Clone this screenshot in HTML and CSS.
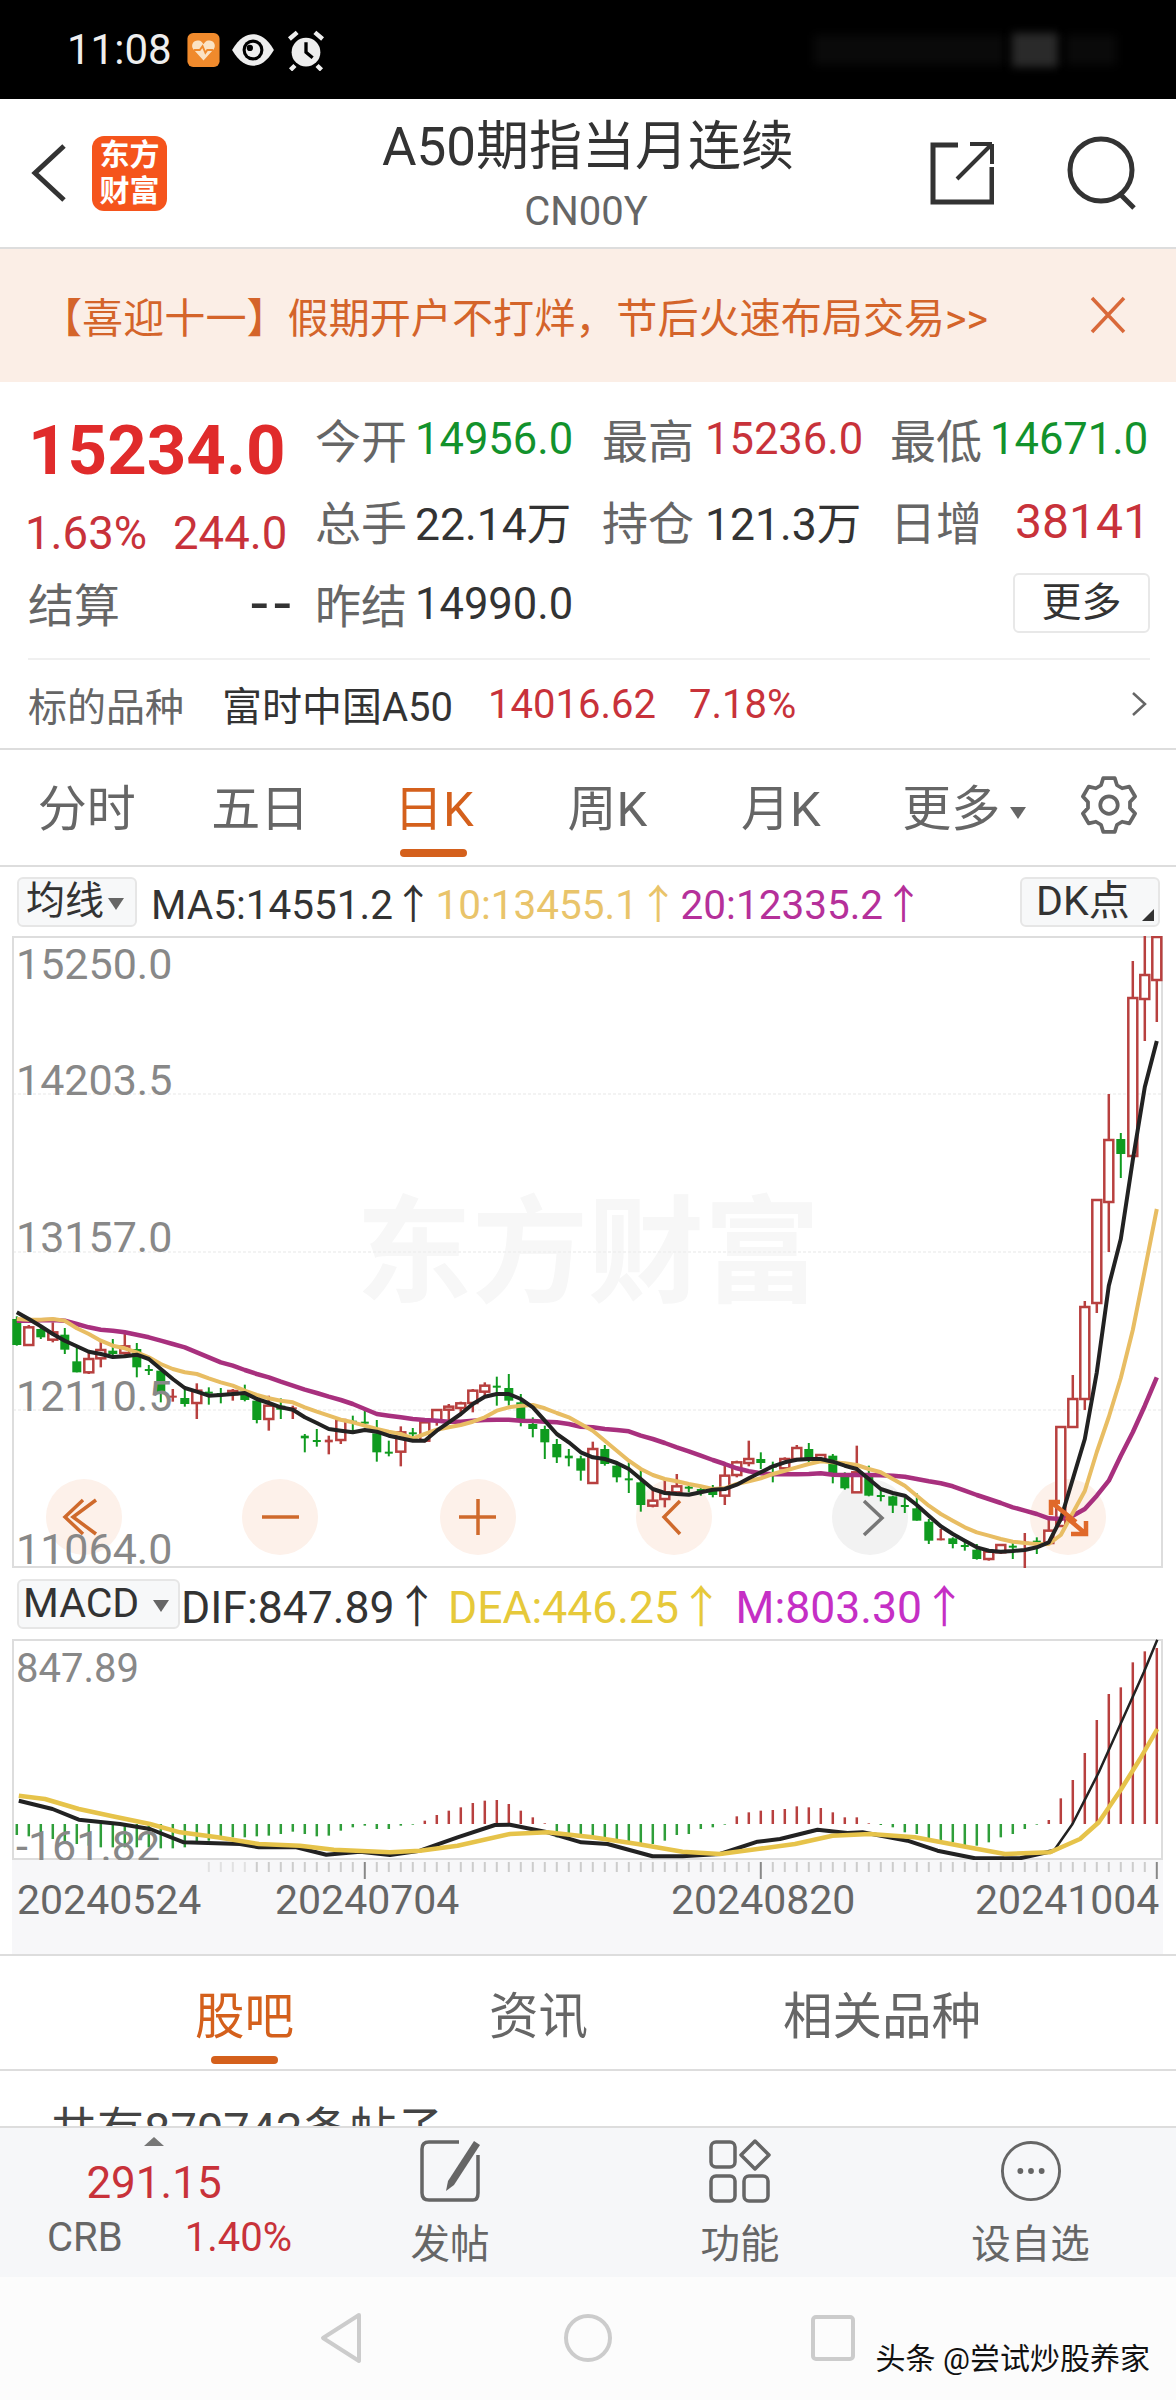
FILE: index.html
```html
<!DOCTYPE html>
<html lang="zh-CN">
<head>
  <meta charset="UTF-8">
  <meta name="viewport" content="width=device-width, initial-scale=1.0">
  <title>A50期指当月连续</title>
  <link rel="stylesheet" href="styles.css">
</head>
<body>
  <div class="page">

    <!-- Status bar -->
    <div class="status-bar">
      <span class="status-time">11:08</span>
      <svg class="status-app" viewBox="0 0 34 36">
        <rect width="34" height="36" rx="6" fill="#f08a2c"/>
        <path d="M17 29 6 17c-3-5 1-10 6-9 2 0 4 2 5 4 1-2 3-4 5-4 5-1 9 4 6 9z" fill="#fbe3c4"/>
        <path d="M7 18h6l3-4 3 7 2-3h6" fill="none" stroke="#f08a2c" stroke-width="2"/>
      </svg>
      <svg class="status-eye" viewBox="0 0 44 34">
        <path d="M2 17C9 5 16 2 22 2s13 3 20 15c-7 12-14 15-20 15S9 29 2 17z" fill="#eee"/>
        <circle cx="22" cy="17" r="10" fill="#000"/>
        <circle cx="22" cy="17" r="7" fill="#eee"/>
        <circle cx="19" cy="15" r="3" fill="#000"/>
      </svg>
      <svg class="status-alarm" viewBox="0 0 36 38">
        <circle cx="18" cy="21" r="13" fill="#eee"/>
        <path d="M18 12v9l6 5" fill="none" stroke="#000" stroke-width="3"/>
        <path d="M3 9l7-6M33 9l-7-6M8 33l-4 4M28 33l4 4" stroke="#eee" stroke-width="4"/>
      </svg>
      <div class="status-right">
        <span class="status-smudge-dim"></span>
        <span class="status-smudge"></span>
        <span class="status-smudge-end"></span>
      </div>
    </div>

    <!-- Header -->
    <div class="header">
      <div class="header-left">
        <svg class="back-icon" viewBox="0 0 38 60">
          <path d="M34 3 5 30l29 27" fill="none" stroke="#333" stroke-width="5"/>
        </svg>
        <div class="app-logo">东方<br>财富</div>
      </div>
      <div class="header-title">
        <div class="title-name">A50期指当月连续</div>
        <div class="title-code">CN00Y</div>
      </div>
      <div class="header-right">
        <svg class="share-icon" viewBox="0 0 64 64">
          <path d="M28 4H3v57h59V26" fill="none" stroke="#333" stroke-width="5"/>
          <path d="M62 3v20M62 3H40M62 3 27 38" fill="none" stroke="#333" stroke-width="4"/>
        </svg>
        <svg class="search-icon" viewBox="0 0 74 76">
          <circle cx="35" cy="35" r="31" fill="none" stroke="#333" stroke-width="5"/>
          <path d="M53 58l15 15" stroke="#333" stroke-width="5"/>
        </svg>
      </div>
    </div>

    <!-- Promo banner -->
    <div class="promo">
      <span>【喜迎十一】假期开户不打烊，节后火速布局交易&gt;&gt;</span>
      <svg class="promo-close" viewBox="0 0 36 38">
        <path d="M2 2l32 34M34 2 2 36" stroke="#d9693a" stroke-width="3.5"/>
      </svg>
    </div>

    <!-- Quote -->
    <div class="quote">
      <div class="quote-cell price">15234.0</div>
      <div class="quote-stats">
        <span class="label">今开</span><span class="value green">14956.0</span>
        <span class="label">最高</span><span class="value red">15236.0</span>
        <span class="label">最低</span><span class="value green">14671.0</span>
      </div>
      <div class="quote-cell change">
        <span>1.63%</span><span>244.0</span>
      </div>
      <div class="quote-stats">
        <span class="label">总手</span><span class="value value-wan">22.14万</span>
        <span class="label">持仓</span><span class="value value-wan">121.3万</span>
        <span class="label">日增</span><span class="value red value-right">38141</span>
      </div>
      <div class="quote-cell settle">
        <span class="label">结算</span><span class="value value-dash">--</span>
      </div>
      <div class="quote-stats">
        <span class="label">昨结</span><span class="value">14990.0</span>
        <span></span><span></span>
        <span></span><button class="more-btn">更多</button>
      </div>
    </div>

    <!-- Underlying -->
    <div class="underlying">
      <span class="underlying-label">标的品种</span>
      <span class="underlying-name">富时中国A50</span>
      <span class="underlying-num">14016.62</span>
      <span class="underlying-num">7.18%</span>
      <svg class="underlying-arrow" viewBox="0 0 16 26">
        <path d="M2 2l12 11L2 24" fill="none" stroke="#666" stroke-width="2.5"/>
      </svg>
    </div>

    <!-- Period tabs -->
    <div class="period-tabs">
      <span class="period-tab">分时</span>
      <span class="period-tab">五日</span>
      <span class="period-tab active">日K</span>
      <span class="period-tab">周K</span>
      <span class="period-tab">月K</span>
      <span class="period-tab period-more">更多<i class="caret"></i></span>
      <svg class="gear-icon" viewBox="0 0 48 48">
        <polygon points="17.6,8.2 19.4,2.5 28.6,2.5 30.4,8.2 34.5,10.6 40.3,9.3 44.9,17.2 40.8,21.6 40.8,26.4 44.9,30.8 40.3,38.7 34.5,37.4 30.4,39.8 28.6,45.5 19.4,45.5 17.6,39.8 13.5,37.4 7.7,38.7 3.1,30.8 7.2,26.4 7.2,21.6 3.1,17.2 7.7,9.3 13.5,10.6" fill="none" stroke="#666" stroke-width="3" stroke-linejoin="round"/>
        <circle cx="24" cy="24" r="7" fill="none" stroke="#666" stroke-width="3"/>
      </svg>
    </div>

    <!-- MA legend -->
    <div class="legend legend-ma">
      <button class="legend-btn ma-btn">均线<i class="caret"></i></button>
      <span class="legend-item ink ma5">MA5:14551.2↑</span>
      <span class="legend-item ma10">10:13455.1↑</span>
      <span class="legend-item ma20">20:12335.2↑</span>
      <button class="legend-btn dk-btn">DK点<i class="corner"></i></button>
    </div>

    <!-- K line chart -->
    <div class="chart chart-main">
      <div class="watermark">东方财富</div>
      <svg id="klineChart" width="1151" height="632" viewBox="12 937 1151 632"></svg>
      <span class="y-label y1">15250.0</span>
      <span class="y-label y2">14203.5</span>
      <span class="y-label y3">13157.0</span>
      <span class="y-label y4">12110.5</span>
      <span class="y-label y5">11064.0</span>
    </div>

    <!-- MACD legend -->
    <div class="legend legend-macd">
      <button class="legend-btn macd-btn">MACD<i class="caret"></i></button>
      <span class="legend-item ink">DIF:847.89↑</span>
      <span class="legend-item dea">DEA:446.25↑</span>
      <span class="legend-item macd-m">M:803.30↑</span>
    </div>

    <!-- MACD chart -->
    <div class="chart chart-macd">
      <svg id="macdChart" width="1151" height="221" viewBox="12 1640 1151 221"></svg>
      <span class="y-label m1">847.89</span>
      <span class="y-label m2">-161.82</span>
    </div>

    <!-- Date axis -->
    <div class="date-axis">
      <svg id="dateTicks" width="1151" height="24" viewBox="12 1861 1151 24"></svg>
      <span class="date d1">20240524</span>
      <span class="date d2">20240704</span>
      <span class="date d3">20240820</span>
      <span class="date d4">20241004</span>
    </div>

    <!-- Content tabs -->
    <div class="content-tabs">
      <span class="content-tab active">股吧</span>
      <span class="content-tab">资讯</span>
      <span class="content-tab">相关品种</span>
    </div>
    <div class="post-count">
      <div class="post-count-text">共有870742条帖子</div>
    </div>

    <!-- Bottom toolbar -->
    <div class="toolbar">
      <div class="crb">
        <i class="crb-arrow"></i>
        <div class="crb-value">291.15</div>
        <div class="crb-row"><span class="crb-name">CRB</span><span class="crb-pct">1.40%</span></div>
      </div>
      <div class="tool">
        <svg class="tool-icon" viewBox="0 0 62 64">
          <path d="M40 3H10Q3 3 3 10v44q0 7 7 7h44q5 0 5-7V16" fill="none" stroke="#666" stroke-width="3.5"/>
          <path d="M55 2 61 6 35 46l-8 6 2-10z" fill="#666"/>
        </svg>
        <span>发帖</span>
      </div>
      <div class="tool">
        <svg class="tool-icon" viewBox="0 0 62 64">
          <rect x="2" y="3" width="24" height="25" rx="5" fill="none" stroke="#666" stroke-width="3.5"/>
          <path d="M46 2 60 16 46 30 32 16z" fill="none" stroke="#666" stroke-width="3.5" stroke-linejoin="round"/>
          <rect x="2" y="37" width="24" height="25" rx="5" fill="none" stroke="#666" stroke-width="3.5"/>
          <rect x="35" y="37" width="24" height="25" rx="5" fill="none" stroke="#666" stroke-width="3.5"/>
        </svg>
        <span>功能</span>
      </div>
      <div class="tool">
        <svg class="tool-icon" viewBox="0 0 64 64">
          <circle cx="32" cy="32" r="29.5" fill="none" stroke="#666" stroke-width="3"/>
          <circle cx="21" cy="32" r="3" fill="#666"/>
          <circle cx="32" cy="32" r="3" fill="#666"/>
          <circle cx="43" cy="32" r="3" fill="#666"/>
        </svg>
        <span>设自选</span>
      </div>
    </div>

    <!-- Android nav bar -->
    <div class="nav-bar">
      <svg class="nav-icon nav-back" width="44" height="52" viewBox="0 0 44 52">
        <path d="M40 3 4 26l36 23z" fill="none" stroke="#ccc" stroke-width="4" stroke-linejoin="round"/>
      </svg>
      <svg class="nav-icon nav-home" width="52" height="52" viewBox="0 0 52 52">
        <circle cx="26" cy="26" r="22" fill="none" stroke="#ccc" stroke-width="4"/>
      </svg>
      <svg class="nav-icon" width="46" height="48" viewBox="0 0 46 48">
        <rect x="2" y="3" width="40" height="42" rx="3" fill="none" stroke="#ccc" stroke-width="4"/>
      </svg>
      <span class="source-mark">头条 @尝试炒股养家</span>
    </div>
  </div>

  <script src="chart.js"></script>
</body>
</html>
```

FILE: styles.css
```css
body {
  margin: 0;
  font-family: Roboto, "Noto Sans CJK SC", sans-serif;
  color: #333;
  background: #fff;
}

.page {
  width: 1176px;
  height: 2400px;
  display: flex;
  flex-direction: column;
  overflow: hidden;
}

button {
  font-family: inherit;
  color: #333;
}

/* Status bar */
.status-bar {
  height: 99px;
  background: #000;
  display: flex;
  align-items: center;
  padding-left: 67px;
}

.status-time {
  color: #eee;
  font-size: 42px;
  width: 120px;
}

.status-app {
  width: 33px;
  height: 34px;
}

.status-eye {
  width: 46px;
  height: 36px;
  margin-left: 10px;
}

.status-alarm {
  width: 40px;
  height: 42px;
  margin-left: 10px;
}

.status-right {
  margin-left: auto;
  display: flex;
  align-items: center;
  gap: 8px;
  margin-right: 60px;
}

.status-smudge-dim {
  width: 190px;
  height: 30px;
  background: #0a0a0a;
  filter: blur(5px);
}

.status-smudge {
  width: 46px;
  height: 34px;
  background: #2a2a2a;
  filter: blur(4px);
}

.status-smudge-end {
  width: 50px;
  height: 30px;
  background: #0a0a0a;
  filter: blur(5px);
}

/* Header */
.header {
  height: 148px;
  display: grid;
  grid-template-columns: 1fr auto 1fr;
  align-items: center;
  border-bottom: 2px solid #ddd;
}

.header-left {
  display: flex;
  align-items: center;
  padding-left: 30px;
}

.back-icon {
  width: 38px;
  height: 60px;
}

.app-logo {
  width: 75px;
  height: 75px;
  margin-left: 24px;
  background: #f5541c;
  border-radius: 12px;
  color: #fff;
  font-size: 30px;
  font-weight: 700;
  line-height: 36px;
  text-align: center;
  display: flex;
  align-items: center;
  justify-content: center;
}

.header-title {
  text-align: center;
}

.title-name {
  font-size: 53px;
  line-height: 64px;
  color: #333;
  margin-top: 5px;
}

.title-code {
  font-size: 40px;
  line-height: 50px;
  color: #666;
  margin-top: 8px;
  padding-right: 4px;
}

.header-right {
  display: flex;
  align-items: center;
  justify-content: flex-end;
  padding-right: 36px;
}

.share-icon {
  width: 64px;
  height: 64px;
  margin-right: 72px;
}

.search-icon {
  width: 74px;
  height: 76px;
}

/* Promo banner */
.promo {
  height: 133px;
  flex: none;
  box-sizing: border-box;
  padding: 0 0 2px 41px;
  background: #fbeee6;
  color: #d4642a;
  font-size: 41.1px;
  display: flex;
  align-items: center;
}

.promo-close {
  width: 36px;
  height: 38px;
  margin-left: auto;
  margin-right: 50px;
}

/* Quote */
.quote {
  height: 278px;
  flex: none;
  box-sizing: border-box;
  padding-top: 14px;
  margin: 0 26px 0 28px;
  display: grid;
  grid-template-columns: 287px 1fr;
  grid-auto-rows: 82.5px;
  border-bottom: 2px solid #f0f0f0;
}

.quote-cell {
  display: flex;
  align-items: center;
}

.quote-stats {
  display: grid;
  grid-template-columns: 100px 187px 103px 185px 100px 1fr;
  align-items: center;
  padding-top: 1px;
}

.label {
  font-size: 46px;
  color: #666;
}

.value {
  font-size: 43.5px;
  color: #333;
  padding-top: 3px;
}

.value-wan {
  font-size: 44.5px;
  padding-top: 0;
}

.value-dash {
  font-size: 62px;
  letter-spacing: 6px;
  padding-top: 0;
}

.red {
  color: #c8323a;
}

.green {
  color: #12922c;
}

.value-right {
  text-align: right;
  font-size: 48px;
}

.price {
  font-size: 69px;
  font-weight: 700;
  color: #e02b2b;
  padding-top: 26px;
}

.change {
  font-size: 45.5px;
  color: #c8323a;
  gap: 26px;
  margin-left: -3px;
  padding-top: 27px;
}

.settle {
  justify-content: space-between;
  padding-right: 18px;
}

.more-btn {
  width: 137px;
  height: 60px;
  padding: 0;
  justify-self: end;
  font-size: 40px;
  line-height: 1;
  background: #fff;
  border: 2px solid #e8e8e8;
  border-radius: 6px;
  margin-left: -40px;
}

/* Underlying row */
.underlying {
  height: 88px;
  flex: none;
  display: flex;
  align-items: center;
  padding-left: 28px;
  font-size: 39px;
  border-bottom: 2px solid #ddd;
}

.underlying-label {
  color: #666;
  width: 194px;
}

.underlying-name {
  color: #333;
  width: 266px;
  font-size: 40px;
}

.underlying-num {
  color: #c8323a;
  margin-right: 33px;
  font-size: 40px;
}

.underlying-arrow {
  width: 16px;
  height: 26px;
  margin-left: auto;
  margin-right: 29px;
}

/* Period tabs */
.period-tabs {
  flex: none;
  box-sizing: border-box;
  height: 117px;
  padding-bottom: 6px;
  display: grid;
  grid-template-columns: repeat(6, 173.5px) 1fr;
  align-items: center;
  border-bottom: 2px solid #ddd;
}

.period-tab {
  text-align: center;
  font-size: 49px;
  color: #666;
  position: relative;
}

.period-more {
  padding-left: 20px;
  white-space: nowrap;
}

.period-tab.active {
  color: #d4601c;
}

.period-tab.active::after {
  content: "";
  position: absolute;
  left: 53px;
  right: 54px;
  top: 80px;
  height: 8px;
  border-radius: 4px;
  background: #d4601c;
}

.caret {
  display: inline-block;
  width: 0;
  height: 0;
  margin-left: 10px;
  vertical-align: middle;
  border-left: 8px solid transparent;
  border-right: 8px solid transparent;
  border-top: 12px solid #666;
}

.gear-icon {
  width: 60px;
  height: 60px;
  justify-self: center;
}

/* Legends above the charts */
.legend {
  flex: none;
  display: flex;
  align-items: center;
  white-space: nowrap;
}

.legend-ma {
  height: 69px;
  font-size: 40.5px;
  padding-left: 17px;
}

.legend-macd {
  height: 71px;
  font-size: 44.5px;
  padding-left: 17px;
}

.legend-btn {
  height: 50px;
  padding: 0 0 0 7px;
  font-size: 39px;
  line-height: 1;
  text-align: left;
  background: #f7f8f9;
  border: 2px solid #e6e6e6;
  border-radius: 6px;
}

.ma-btn {
  width: 120px;
  margin-right: 14px;
}

.ma-btn .caret,
.macd-btn .caret {
  margin-left: 4px;
}

.macd-btn {
  width: 163px;
  margin-right: 1px;
  padding-left: 4px;
  font-size: 41px;
}

.macd-btn .caret {
  margin-left: 14px;
}

.dk-btn {
  width: 140px;
  margin-left: auto;
  margin-right: 16px;
  padding-left: 14px;
  font-size: 41px;
  position: relative;
}

.corner {
  position: absolute;
  right: 4px;
  bottom: 4px;
  width: 0;
  height: 0;
  border-left: 12px solid transparent;
  border-bottom: 12px solid #333;
}

.legend-item {
  margin-right: 11px;
}

.ink {
  color: #333;
}

.ma5 {
  margin-right: 2px;
}

.ma10 {
  color: #e9c46a;
  margin-right: 2px;
}

.ma20 {
  color: #b5309a;
}

.dea {
  color: #e6c93a;
  margin-left: -2px;
  margin-right: 12px;
}

.macd-m {
  color: #c52fc5;
}

/* Charts */
.chart {
  position: relative;
  flex: none;
  margin-left: 12px;
  width: 1151px;
}

.chart svg {
  position: absolute;
  left: 0;
  top: 0;
}

.chart-main {
  height: 632px;
}

.chart-macd {
  height: 221px;
}

.watermark {
  position: absolute;
  left: 344px;
  top: 259px;
  font-size: 116px;
  font-weight: 700;
  line-height: 1;
  color: #f7f7f7;
}

.y-label {
  position: absolute;
  left: 4px;
  font-size: 43px;
  line-height: 1;
  color: #888;
}

.y1 { top: 7px; }
.y2 { top: 123px; }
.y3 { top: 280px; }
.y4 { top: 439px; }
.y5 { top: 592px; }

.m1 {
  top: 10px;
  font-size: 40px;
}

.m2 {
  top: 186px;
  font-size: 43px;
}

/* Date axis */
.date-axis {
  position: relative;
  flex: none;
  height: 94px;
  margin: 0 13px 0 12px;
  background: #f7f7f9;
}

.date-axis svg {
  position: absolute;
  left: 0;
  top: 0;
}

.date {
  position: absolute;
  top: 20px;
  font-size: 41px;
  line-height: 1;
  color: #666;
}

.d1 { left: 5px; }
.d2 { left: 263px; }
.d3 { left: 659px; }
.d4 { left: 963px; }

/* Content tabs */
.content-tabs {
  height: 117px;
  flex: none;
  box-sizing: border-box;
  display: flex;
  align-items: center;
  gap: 195px;
  padding-left: 195px;
  border-top: 2px solid #ddd;
  border-bottom: 2px solid #ddd;
}

.content-tab {
  font-size: 49.5px;
  color: #666;
  position: relative;
}

.content-tab.active {
  color: #d4601c;
}

.content-tab.active::after {
  content: "";
  position: absolute;
  left: 16px;
  right: 16px;
  bottom: -16px;
  height: 8px;
  border-radius: 4px;
  background: #d4601c;
}

.post-count {
  height: 55px;
  flex: none;
  overflow: hidden;
  padding-left: 50px;
}

.post-count-text {
  font-size: 47px;
  line-height: 60px;
  margin-top: 29px;
  color: #444;
}

/* Bottom toolbar */
.toolbar {
  height: 151px;
  flex: none;
  box-sizing: border-box;
  display: grid;
  grid-template-columns: 305px 290px 290px 1fr;
  background: #f6f7f9;
  border-top: 2px solid #ddd;
}

.crb {
  position: relative;
  padding: 0 13px 0 47px;
}

.crb-arrow {
  position: absolute;
  left: 144px;
  top: 9px;
  border-left: 10px solid transparent;
  border-right: 10px solid transparent;
  border-bottom: 9px solid #777;
}

.crb-value {
  margin-top: 30px;
  font-size: 44px;
  line-height: 50px;
  text-align: center;
  padding-right: 31px;
  color: #c8323a;
}

.crb-row {
  display: flex;
  justify-content: space-between;
  margin-top: 5px;
  font-size: 40px;
  line-height: 50px;
}

.crb-name {
  color: #666;
}

.crb-pct {
  color: #c8323a;
}

.tool {
  display: flex;
  flex-direction: column;
  align-items: center;
  padding-top: 11px;
  font-size: 39.5px;
  line-height: 50px;
  color: #666;
}

.tool-icon {
  width: 62px;
  height: 64px;
  margin-bottom: 17px;
}

/* Nav bar */
.nav-bar {
  flex: 1;
  position: relative;
  background: #fcfcfc;
  display: flex;
  align-items: center;
  gap: 197px;
  padding-left: 318px;
  padding-bottom: 2px;
}

.nav-icon {
  flex: none;
}

.nav-back {
  width: 46px;
}

.nav-home {
  margin-left: 1px;
}

.source-mark {
  position: absolute;
  right: 26px;
  top: 62px;
  font-size: 30px;
  line-height: 40px;
  color: #111;
  text-shadow: 0 0 2px #fff, 1px 1px 0 #fff;
}
```

FILE: chart.js
```js
// Candles traced off the app. y values are in 1/3 px from y=1240, so a value of
// 0 is page y 1240. Each row: [colour, high, bodyTop, bodyBottom, low]
const candles = [
  ['g',232,240,318,320],['r',258,265,318,320],['g',258,270,295,300],['r',250,280,302,310],
  ['g',267,287,332,345],['g',325,367,400,400],['r',340,360,400,405],['r',307,333,358,385],
  ['g',300,335,345,350],['r',280,322,342,350],['g',312,330,385,415],['g',378,390,394,408],
  ['g',390,395,460,490],['R',450,470,474,488],['g',445,477,495,503],['r',433,455,492,540],
  ['g',445,458,462,497],['g',447,462,466,493],['r',450,456,466,485],['g',437,465,483,487],
  ['g',478,485,543,553],['r',470,500,540,575],['g',478,500,512,540],['R',500,505,510,540],
  ['g',585,590,598,640],['g',570,603,608,623],['R',590,602,610,646],['r',540,543,603,615],
  ['g',530,545,549,578],['g',507,548,552,565],['g',543,583,640,668],['g',605,638,642,652],
  ['r',562,580,638,682],['g',567,580,586,605],['r',540,550,605,610],['r',510,513,545,560],
  ['r',495,503,512,550],['r',488,493,507,530],['r',450,455,492,520],['r',430,440,458,470],
  ['g',413,440,446,500],['g',405,447,485,500],['g',465,490,548,562],['g',535,555,570,595],
  ['g',560,570,610,660],['g',600,615,655,672],['g',630,650,658,682],['g',650,658,695,725],
  ['r',608,630,732,735],['g',618,630,675,680],['g',668,680,715,730],['g',670,718,724,762],
  ['g',690,730,798,818],['r',745,785,800,805],['r',723,760,780,805],['r',705,742,760,770],
  ['g',733,743,747,760],['g',740,750,754,770],['g',738,755,768,775],['r',680,710,770,798],
  ['r',665,670,708,715],['r',605,660,672,682],['g',640,660,672,690],['g',668,680,684,730],
  ['r',655,660,688,692],['r',618,627,660,665],['g',612,630,660,678],['r',645,648,662,668],
  ['g',645,650,705,733],['g',700,710,748,752],['r',620,700,760,762],['g',680,705,770,772],
  ['g',745,768,772,787],['g',770,772,800,822],['g',775,798,802,822],['g',763,808,845,845],
  ['g',840,848,905,915],['R',870,898,904,904],['g',895,898,915,928],['g',908,918,924,935],
  ['g',915,932,960,962],['r',935,938,960,965],['r',915,918,940,945],['g',910,920,926,960],
  ['R',882,908,914,988],['g',895,905,911,945],['r',840,875,912,915],['r',564,564,861,861],
  ['r',408,480,564,564],['r',186,204,480,513],['r',-117,-117,192,222],['r',-435,-297,-111,39],
  ['g',-318,-300,-255,-183],['r',-834,-723,-249,-249],['r',-909,-792,-720,-594],['r',-909,-906,-777,-651]
];

const ma5 = [220,240,262,285,305,322,338,345,354,352,347,360,390,420,447,458,470,468,465,462,
  480,492,505,512,535,552,570,575,580,573,578,590,598,605,605,575,550,525,495,473,
  465,465,480,505,545,585,610,640,655,660,672,690,720,750,762,765,767,760,752,750,
  737,718,700,682,670,662,660,660,668,680,690,720,750,762,770,798,830,862,885,905,
  925,935,938,936,933,925,910,840,720,600,400,140,0,-237,-456,-594];

const ma10 = [240,242,242,240,245,268,285,305,320,328,340,355,375,390,400,405,418,430,440,455,
  468,478,485,490,505,518,530,542,550,560,570,578,585,598,585,572,565,558,548,535,
  515,505,500,498,508,522,535,555,575,605,635,665,690,708,720,727,735,742,750,748,
  735,727,718,705,695,685,675,667,670,673,678,690,700,720,740,770,800,825,845,865,
  880,890,900,908,912,915,915,888,822,756,639,534,417,273,93,-90];

const ma20 = [245,245,244,243,245,255,265,272,275,280,287,295,305,315,325,340,355,370,380,393,
  405,415,428,440,452,462,473,483,495,510,525,530,535,540,543,545,548,548,545,543,
  542,542,545,546,548,550,555,563,565,570,573,577,590,600,612,625,637,650,663,675,
  688,697,703,706,706,706,705,703,707,708,708,708,709,710,713,720,727,733,742,755,
  768,780,792,805,815,825,838,840,830,810,770,725,650,580,500,415];

// MACD bar ends, y in 1/3 px from y=1580. The zero line is at 735.
const macdBars = [768,772,775,780,790,795,800,805,805,805,805,805,808,808,805,795,785,778,775,775,
  772,770,765,758,765,772,770,755,745,740,750,750,740,737,725,708,695,685,672,665,
  663,675,695,715,733,775,775,775,778,785,790,795,798,795,785,768,765,750,745,737,
  712,700,695,693,690,682,685,687,700,715,715,733,738,745,760,765,778,790,790,800,
  800,790,775,765,750,737,723,658,603,522,423,345,325,250,217,207];

// DIF and DEA as [x, y], x in 3/4 px and y in 1/3 px from y=1580
const dif = [[25,665],[70,690],[105,722],[160,735],[200,750],[245,790],[320,795],[345,805],[395,805],[435,827],
  [480,818],[520,828],[560,815],[610,775],[660,738],[680,737],[730,760],[775,790],[810,795],[870,832],
  [910,832],[960,825],[1010,788],[1040,780],[1090,752],[1130,762],[1150,760],[1210,785],[1250,815],[1300,838],
  [1360,838],[1405,815]];
const difRise = [[1405,815],[1430,735],[1465,580],[1495,430],[1525,280],[1543,182]];

const dea = [[25,650],[60,660],[105,690],[150,712],[200,735],[240,760],[290,775],[345,795],[400,800],[445,812],
  [520,820],[560,815],[610,800],[680,765],[730,760],[790,775],[850,795],[910,818],[960,825],[1010,810],
  [1060,795],[1110,770],[1160,765],[1220,775],[1280,800],[1340,825],[1400,820],[1440,780],[1465,730],[1495,630],
  [1520,540],[1543,450]];

const RED = '#b8403f';
const GREEN = '#0f9b1f';
const ORANGE = '#cf6a2c';

const candleX = i => 16.8 + 12 * i;
const klineY = v => 1240 + v / 3;
const macdY = v => 1580 + v / 3;

function seriesLine(values, color, width) {
  const points = values.map((v, i) => candleX(i).toFixed(1) + ',' + klineY(v).toFixed(1)).join(' ');
  return `<polyline points="${points}" fill="none" stroke="${color}" stroke-width="${width}" stroke-linejoin="round"/>`;
}

function tracedLine(points, color, width) {
  const str = points.map(p => (p[0] * 0.75).toFixed(1) + ',' + macdY(p[1]).toFixed(1)).join(' ');
  return `<polyline points="${str}" fill="none" stroke="${color}" stroke-width="${width}" stroke-linejoin="round"/>`;
}

function drawCandle(c, i) {
  const [kind, high, top, bottom, low] = c;
  const x = candleX(i);
  const color = kind === 'g' ? GREEN : RED;
  const y0 = klineY(top);
  const h = Math.max(klineY(bottom) - y0, 2);
  let out = `<line x1="${x}" x2="${x}" y1="${klineY(high)}" y2="${klineY(low)}" stroke="${color}" stroke-width="${kind === 'g' ? 2 : 2.5}"/>`;
  if (kind === 'r') {
    out += `<rect x="${x - 4.5}" y="${y0}" width="9" height="${h}" fill="#fff" stroke="${color}" stroke-width="2.5"/>`;
  } else {
    const w = bottom - top < 10 ? 8 : 9;
    out += `<rect x="${x - w / 2}" y="${y0}" width="${w}" height="${h}" fill="${color}"/>`;
  }
  return out;
}

function drawKline() {
  let svg = '';
  // grid
  [1095, 1253, 1411].forEach(y => {
    svg += `<line x1="13" x2="1162" y1="${y}" y2="${y}" stroke="#f0f0f0" stroke-width="1.5" stroke-dasharray="3 2"/>`;
  });
  svg += '<rect x="13" y="938" width="1149" height="630" fill="none" stroke="#ddd" stroke-width="2"/>';

  // round buttons sit behind the candles
  [84, 280, 478, 674].forEach(x => {
    svg += `<circle cx="${x}" cy="1518" r="38" fill="#fdf1ea"/>`;
  });
  svg += '<circle cx="870" cy="1518" r="38" fill="#f2f2f2"/>';
  svg += '<circle cx="1068" cy="1518" r="38" fill="#fdf1ea"/>';

  candles.forEach((c, i) => { svg += drawCandle(c, i); });
  svg += seriesLine(ma20, '#a8307e', 4.5);
  svg += seriesLine(ma10, '#e8bd63', 4);
  svg += seriesLine(ma5, '#222', 4);

  // button glyphs
  const glyph = `fill="none" stroke="${ORANGE}" stroke-width="3.5"`;
  svg += `<path d="M83 1501 65 1518l18 17M96 1501 73 1518l23 17" ${glyph}/>`;
  svg += `<path d="M262 1518h37" ${glyph}/>`;
  svg += `<path d="M459 1518h37M478 1500v36" ${glyph}/>`;
  svg += `<path d="M680 1502 664 1518l16 17" ${glyph}/>`;
  svg += '<path d="M864 1502l18 17-18 17" fill="none" stroke="#777" stroke-width="3.5"/>';
  const arrow = 'fill="none" stroke="#e0692a" stroke-width="4.5"';
  svg += `<path d="M1060 1503h-9v13M1051 1503l25 20" ${arrow}/>`;
  svg += `<path d="M1071 1535h15v-13M1086 1535l-20-17" ${arrow}/>`;
  document.getElementById('klineChart').innerHTML = svg;
}

function drawMacd() {
  let svg = '<rect x="13" y="1641" width="1149" height="219" fill="none" stroke="#ddd" stroke-width="2"/>';
  macdBars.forEach((v, i) => {
    const x = candleX(i);
    const color = v > 735 ? '#2f9e3a' : '#b8403f';
    svg += `<line x1="${x}" x2="${x}" y1="${macdY(735)}" y2="${macdY(v)}" stroke="${color}" stroke-width="2.5"/>`;
  });
  svg += tracedLine(dif, '#222', 4);
  svg += tracedLine(difRise, '#222', 2.5);
  svg += tracedLine(dea, '#e6c34a', 4.5);
  document.getElementById('macdChart').innerHTML = svg;
}

function drawTicks() {
  let svg = '';
  for (let i = 16; i < 96; i++) {
    const x = candleX(i);
    const major = i === 29 || i === 62 || i === 95;
    const y2 = major ? 1880 : 1873;
    const color = major ? '#888' : '#ccc';
    const fade = i < 20 ? 0.5 : 1;
    svg += `<line x1="${x}" x2="${x}" y1="1863" y2="${y2}" stroke="${color}" stroke-width="2" opacity="${fade}"/>`;
  }
  document.getElementById('dateTicks').innerHTML = svg;
}

drawKline();
drawMacd();
drawTicks();
```
